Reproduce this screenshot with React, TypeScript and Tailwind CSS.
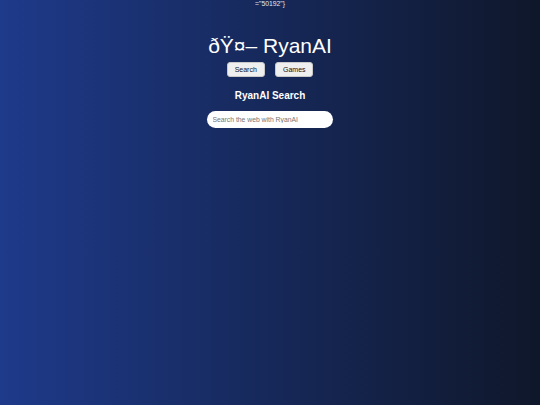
import React from 'react';

const font = { fontFamily: '"Liberation Sans", Arial, sans-serif' };

const NavButton: React.FC<{ label: string }> = ({ label }) => (
  <button className="h-[15px] w-[38px] rounded-[3px] border border-[#c9c9c9] bg-[#efefef] text-[7px] leading-none text-[#111]">
    {label}
  </button>
);

export default function App() {
  return (
    <div className="flex min-h-screen w-full flex-col items-center bg-linear-to-r/srgb from-[#1e3a8a] to-[#0f172a] text-white" style={font}>
      <div className="pt-[1px] text-[6.8px] leading-none text-[#e5e7eb]">="50192"{'}'}</div>
      <h1 className="mt-[27px] text-[21px] font-normal leading-none">{'\u00F0\u0178\u00A4\u2013'} RyanAI</h1>
      <div className="mt-[6px] flex gap-[10.5px]">
        <NavButton label="Search" />
        <NavButton label="Games" />
      </div>
      <h2 className="mt-[14.5px] text-[10px] font-bold leading-none">RyanAI Search</h2>
      <input
        type="text"
        placeholder="Search the web with RyanAI"
        className="mt-[9.3px] h-[17.5px] w-[126px] rounded-full border-0 bg-white px-[5.5px] text-[6.8px] text-black outline-none placeholder:text-[#757575]"
      />
    </div>
  );
}
